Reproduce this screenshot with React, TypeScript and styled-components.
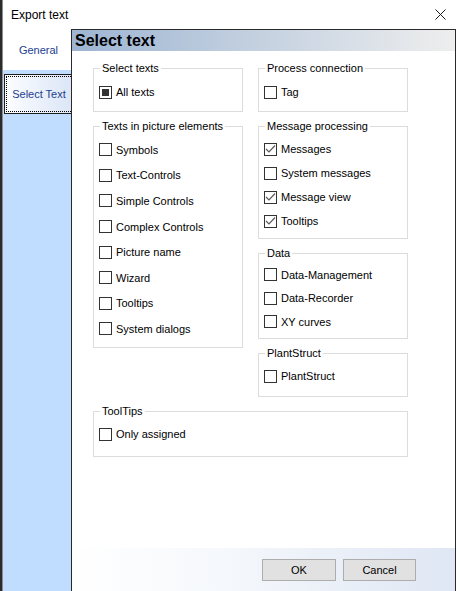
import React from "react";
import styled, { createGlobalStyle } from "styled-components";

const Global = createGlobalStyle`
  html, body { margin: 0; padding: 0; background: #2b2b2b; }
  body { font-family: "Liberation Sans", Arial, sans-serif; }
  * { box-sizing: border-box; }
`;

const Frame = styled.div`
  width: 458px;
  height: 591px;
  display: flex;
  overflow: hidden;
`;

const Window = styled.div`
  flex: 1;
  margin-left: 2px;
  border-left: 1px solid #8c8c8c;
  background: #ffffff;
  display: flex;
  flex-direction: column;
`;

const TitleBar = styled.div`
  height: 29px;
  flex: none;
  display: flex;
  align-items: center;
  justify-content: space-between;
  padding: 0 12px 0 8px;
  font-size: 12px;
  color: #000;
`;

const Body = styled.div`
  flex: 1;
  display: flex;
  min-height: 0;
`;

const TabStrip = styled.div`
  width: 68px;
  flex: none;
  background: #c0dcff;
  display: flex;
  flex-direction: column;
`;

const PlainTab = styled.div`
  height: 41px;
  background: #ffffff;
  display: flex;
  align-items: center;
  justify-content: center;
  padding-left: 3px;
  font-size: 11px;
  color: #22408f;
`;

const FocusTab = styled.div`
  height: 40px;
  margin-top: 4px;
  margin-left: 1px;
  border: 1px solid #1e1e1e;
  border-right: none;
  background: linear-gradient(to right, #fcfdff, #dce6f7);
  display: flex;
  padding: 1px 0 1px 1px;
`;

const FocusRect = styled.div`
  flex: 1;
  border: 1px dotted #000;
  border-right: none;
  display: flex;
  align-items: center;
  justify-content: center;
  font-size: 11px;
  color: #22408f;
`;

const Panel = styled.div`
  flex: 1;
  display: flex;
  flex-direction: column;
  border-top: 1px solid #2a2a2a;
  border-left: 1px solid #2a2a2a;
  border-right: 1px solid #2a2a2a;
  margin-right: 2px;
`;

const Header = styled.div`
  height: 21px;
  flex: none;
  line-height: 21px;
  padding-left: 3px;
  font-size: 16px;
  font-weight: bold;
  color: #000;
  background: linear-gradient(to right, #9db5d3, #eeeeee);
`;

const Content = styled.div`
  flex: 1;
  padding: 17px 0 0 21px;
  display: flex;
  flex-direction: column;
  gap: 14px;
`;

const Columns = styled.div`
  display: flex;
  gap: 15px;
`;

const Column = styled.div`
  width: 150px;
  display: flex;
  flex-direction: column;
  gap: 14px;
`;

const GroupBox = styled.div<{ $h: number; $w?: number; $pt?: number }>`
  position: relative;
  width: ${(p) => p.$w ?? 150}px;
  height: ${(p) => p.$h}px;
  border: 1px solid #dcdcdc;
  padding: ${(p) => p.$pt ?? 10}px 0 0 5px;
  display: flex;
  flex-direction: column;
`;

const Legend = styled.span`
  position: absolute;
  top: -7px;
  left: 6px;
  padding: 0 2px;
  background: #ffffff;
  font-size: 11px;
  line-height: 13px;
  color: #000;
  white-space: nowrap;
`;

const Row = styled.div<{ $row: number }>`
  height: ${(p) => p.$row}px;
  display: flex;
  align-items: center;
  gap: 4px;
  font-size: 11px;
  color: #000;
  white-space: nowrap;
`;

const Box = styled.span`
  width: 13px;
  height: 13px;
  flex: none;
  border: 1px solid #333333;
  background: #ffffff;
  display: flex;
  align-items: center;
  justify-content: center;
`;

const Fill = styled.span`
  width: 7px;
  height: 7px;
  background: #333333;
`;

const Footer = styled.div`
  height: 43px;
  flex: none;
  display: flex;
  justify-content: flex-end;
  align-items: flex-start;
  gap: 7px;
  padding: 11px 39px 0 0;
  background: linear-gradient(to right, #ffffff 0%, #f5f8fc 40%, #dfe7f4 100%);
`;

const Button = styled.button<{ $w: number }>`
  width: ${(p) => p.$w}px;
  height: 22px;
  margin: 0;
  padding: 0;
  background: #e1e1e1;
  border: 1px solid #adadad;
  font-family: "Liberation Sans", Arial, sans-serif;
  font-size: 11px;
  color: #000;
`;

type State = "off" | "on" | "mixed";

function Check({ label, state = "off", row }: { label: string; state?: State; row: number }) {
  return (
    <Row $row={row}>
      <Box>
        {state === "mixed" && <Fill />}
        {state === "on" && (
          <svg width="11" height="11" viewBox="0 0 11 11">
            <polyline points="1,5 4,8 10,1.5" fill="none" stroke="#5a5a5a" strokeWidth="1.2" />
          </svg>
        )}
      </Box>
      <span>{label}</span>
    </Row>
  );
}

function CloseIcon() {
  return (
    <svg width="11" height="11" viewBox="0 0 11 11">
      <path d="M0.5 0.5 L10.5 10.5 M10.5 0.5 L0.5 10.5" stroke="#1a1a1a" strokeWidth="1" />
    </svg>
  );
}

export default function App() {
  const pictureItems = [
    "Symbols",
    "Text-Controls",
    "Simple Controls",
    "Complex Controls",
    "Picture name",
    "Wizard",
    "Tooltips",
    "System dialogs",
  ];
  return (
    <>
      <Global />
      <Frame>
        <Window>
          <TitleBar>
            <span>Export text</span>
            <CloseIcon />
          </TitleBar>
          <Body>
            <TabStrip>
              <PlainTab>General</PlainTab>
              <FocusTab>
                <FocusRect>Select Text</FocusRect>
              </FocusTab>
            </TabStrip>
            <Panel>
              <Header>Select text</Header>
              <Content>
                <Columns>
                  <Column>
                    <GroupBox $h={44} $pt={11}>
                      <Legend>Select texts</Legend>
                      <Check label="All texts" state="mixed" row={24} />
                    </GroupBox>
                    <GroupBox $h={222}>
                      <Legend>Texts in picture elements</Legend>
                      {pictureItems.map((t) => (
                        <Check key={t} label={t} row={25.6} />
                      ))}
                    </GroupBox>
                  </Column>
                  <Column>
                    <GroupBox $h={44} $pt={11}>
                      <Legend>Process connection</Legend>
                      <Check label="Tag" row={24} />
                    </GroupBox>
                    <GroupBox $h={113}>
                      <Legend>Message processing</Legend>
                      <Check label="Messages" state="on" row={24} />
                      <Check label="System messages" row={24} />
                      <Check label="Message view" state="on" row={24} />
                      <Check label="Tooltips" state="on" row={24} />
                    </GroupBox>
                    <GroupBox $h={86} $pt={9}>
                      <Legend>Data</Legend>
                      <Check label="Data-Management" row={23.5} />
                      <Check label="Data-Recorder" row={23.5} />
                      <Check label="XY curves" row={23.5} />
                    </GroupBox>
                    <GroupBox $h={44}>
                      <Legend>PlantStruct</Legend>
                      <Check label="PlantStruct" row={24} />
                    </GroupBox>
                  </Column>
                </Columns>
                <GroupBox $h={46} $w={315}>
                  <Legend>ToolTips</Legend>
                  <Check label="Only assigned" row={24} />
                </GroupBox>
              </Content>
              <Footer>
                <Button $w={74}>OK</Button>
                <Button $w={73}>Cancel</Button>
              </Footer>
            </Panel>
          </Body>
        </Window>
      </Frame>
    </>
  );
}
